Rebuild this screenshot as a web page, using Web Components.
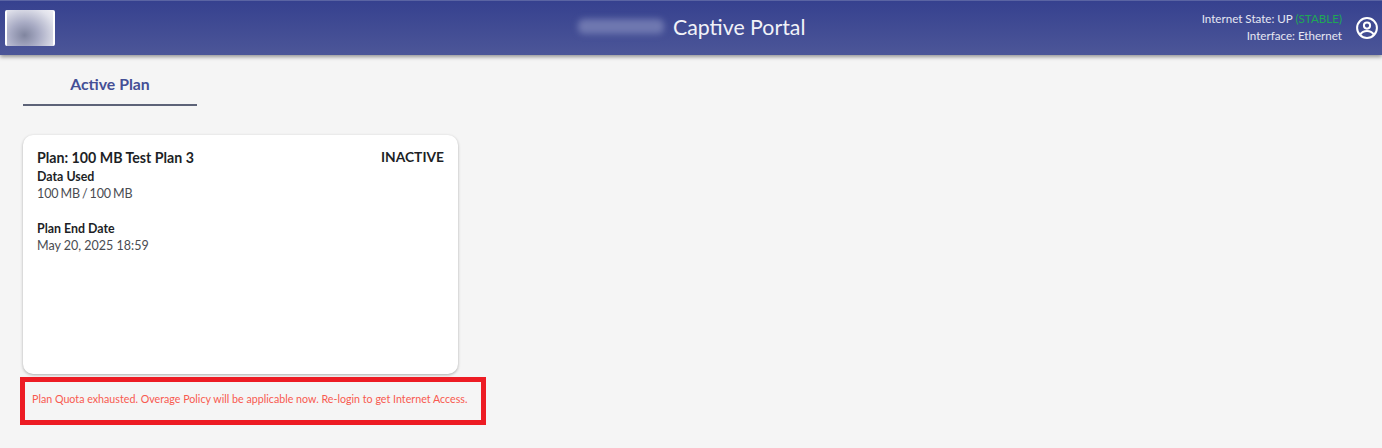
<!DOCTYPE html>
<html>
<head>
<meta charset="utf-8">
<title>Captive Portal</title>
<style>
  html, body { margin: 0; padding: 0; background: #f5f5f5; }
  body { font-family: Lato, "Open Sans", sans-serif; width: 1382px; height: 448px; overflow: hidden; }
</style>
</head>
<body>
<portal-header></portal-header>
<portal-tabs label="Active Plan"></portal-tabs>
<plan-card plan="100 MB Test Plan 3" status="INACTIVE" used="100 MB / 100 MB" end="May 20, 2025 18:59"></plan-card>
<quota-notice>Plan Quota exhausted. Overage Policy will be applicable now. Re-login to get Internet Access.</quota-notice>

<script>
'use strict';

class PortalHeader extends HTMLElement {
  connectedCallback() {
    this.attachShadow({mode: 'open'});
    this.shadowRoot.innerHTML = `
      <style>
        :host {
          display: flex;
          align-items: center;
          justify-content: space-between;
          position: relative;
          height: 55px;
          padding: 0 3px 0 5px;
          background: linear-gradient(180deg, #36418f 0%, #4c5698 100%);
          border-top: 1px solid #5a64a3;
          box-sizing: border-box;
          box-shadow: 0 2px 4px rgba(0,0,0,.4);
          color: #f1f2f8;
        }
        .logo {
          width: 50px;
          height: 36px;
          border-radius: 2px;
          background: radial-gradient(ellipse at 38% 70%, #80859f 0%, #a8abc4 35%, #e2e3ec 80%, #f0f0f5 100%);
          border-left: 2px solid #fff;
          border-right: 2px solid #fff;
          box-sizing: border-box;
          margin-top: -1px;
        }
        .title {
          position: absolute;
          left: 578px;
          top: 0;
          height: 51px;
          display: flex;
          align-items: center;
          gap: 9px;
          font-size: 21.3px;
        }
        .smudge {
          width: 86px;
          height: 15px;
          border-radius: 6px;
          background: #6f78b0;
          filter: blur(3px);
        }
        .right {
          display: flex;
          align-items: center;
          gap: 13px;
        }
        .state {
          text-align: right;
          font-size: 11.6px;
          line-height: 17px;
          margin-top: -2px;
          color: #e6e7f2;
        }
        .stable { color: #1fa855; }
        svg { display: block; width: 24px; height: 24px; }
      </style>
      <div class="logo"></div>
      <div class="title"><div class="smudge"></div><span>Captive Portal</span></div>
      <div class="right">
        <div class="state">
          <div>Internet State: UP <span class="stable">(STABLE)</span></div>
          <div>Interface: Ethernet</div>
        </div>
        <svg viewBox="0 0 24 24" fill="none" stroke="#fff" stroke-width="2">
          <circle cx="12" cy="12" r="9.9"/>
          <circle cx="12" cy="9.6" r="3.1"/>
          <path d="M5.2 18.6c1.6-2.5 4-3.6 6.8-3.6s5.2 1.1 6.8 3.6"/>
        </svg>
      </div>
    `;
  }
}

class PortalTabs extends HTMLElement {
  connectedCallback() {
    this.attachShadow({mode: 'open'});
    this.shadowRoot.innerHTML = `
      <style>
        :host {
          display: block;
          width: 174px;
          margin: 0 0 0 23px;
        }
        .tab {
          height: 51px;
          box-sizing: border-box;
          padding-top: 19px;
          text-align: center;
          font-size: 15.8px;
          line-height: 20px;
          font-weight: 700;
          color: #444f96;
          border-bottom: 2px solid #5d6378;
        }
      </style>
      <div class="tab">${this.getAttribute('label')}</div>
    `;
  }
}

class PlanCard extends HTMLElement {
  connectedCallback() {
    this.attachShadow({mode: 'open'});
    this.shadowRoot.innerHTML = `
      <style>
        :host {
          display: block;
          width: 435px;
          height: 239px;
          margin: 29px 0 0 23px;
          padding: 14px 14px 0;
          box-sizing: border-box;
          background: #fff;
          border-radius: 10px;
          box-shadow: 0 1px 3px rgba(0,0,0,.3);
          color: #1d1f26;
        }
        .top {
          display: flex;
          justify-content: space-between;
          font-size: 14.2px;
          font-weight: 700;
          line-height: 18px;
        }
        .status { font-size: 13.8px; line-height: 16px; }
        .label {
          font-size: 12.4px;
          font-weight: 700;
          line-height: 17px;
          margin-top: 1px;
        }
        .value {
          font-size: 12.5px;
          line-height: 17px;
          color: #4a4c52;
          margin-bottom: 18px;
        }
        .value.used { word-spacing: -1px; letter-spacing: -0.12px; }
      </style>
      <div class="top"><span>Plan: ${this.getAttribute('plan')}</span><span class="status">${this.getAttribute('status')}</span></div>
      <div class="label">Data Used</div>
      <div class="value used">${this.getAttribute('used')}</div>
      <div class="label">Plan End Date</div>
      <div class="value">${this.getAttribute('end')}</div>
    `;
  }
}

class QuotaNotice extends HTMLElement {
  connectedCallback() {
    this.attachShadow({mode: 'open'});
    this.shadowRoot.innerHTML = `
      <style>
        :host {
          display: flex;
          align-items: center;
          width: 466px;
          height: 48px;
          margin: 3px 0 0 20px;
          padding: 0 0 5px 7px;
          box-sizing: border-box;
          border: 5px solid #ed1c24;
          font-size: 10.7px;
          color: #f85a50;
        }
      </style>
      <slot></slot>
    `;
  }
}

customElements.define('portal-header', PortalHeader);
customElements.define('portal-tabs', PortalTabs);
customElements.define('plan-card', PlanCard);
customElements.define('quota-notice', QuotaNotice);
</script>
</body>
</html>
